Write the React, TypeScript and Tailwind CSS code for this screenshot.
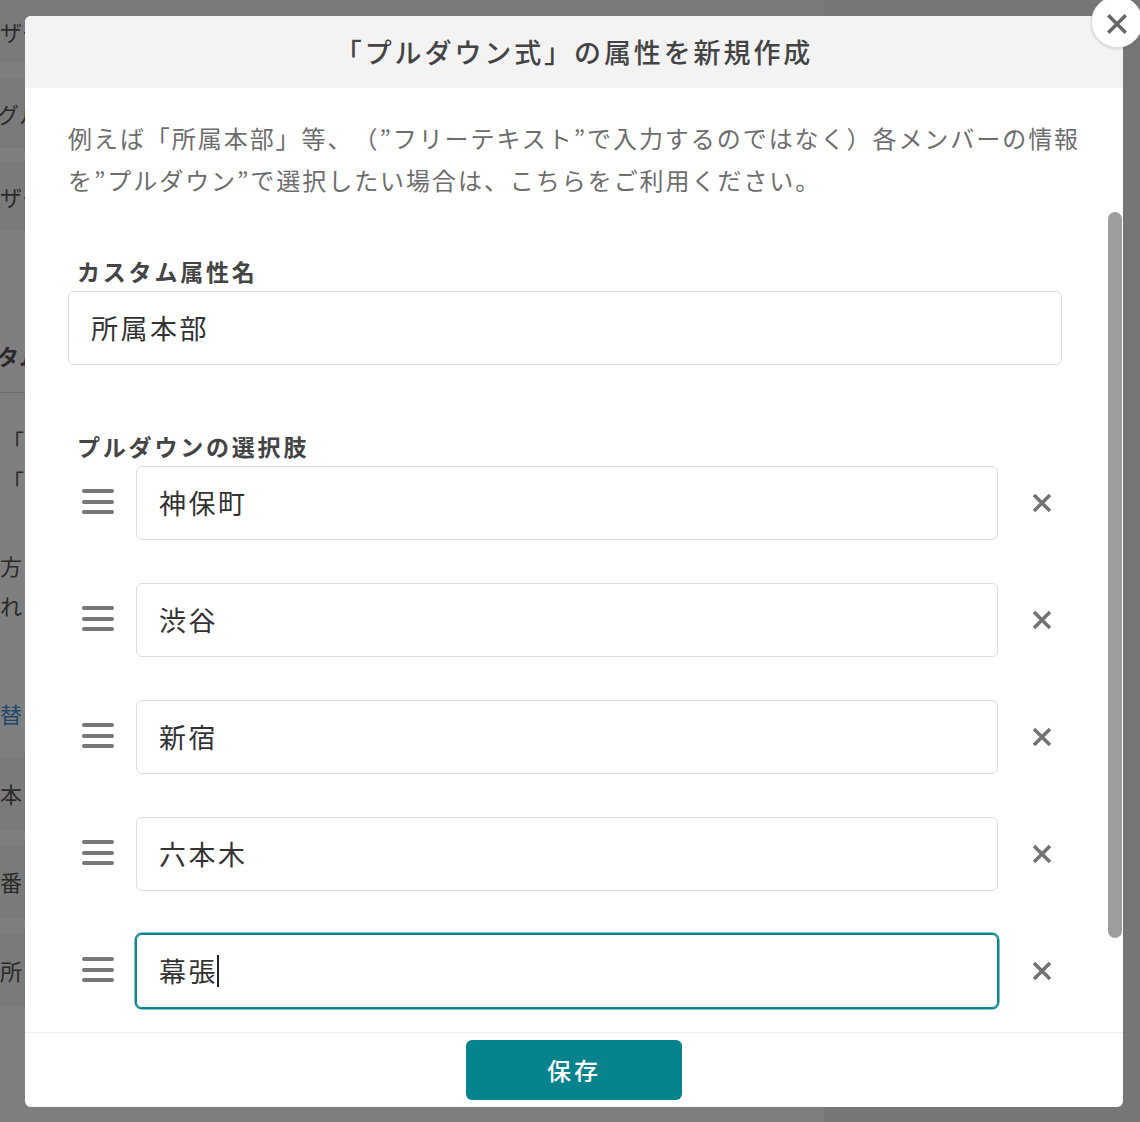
import React from "react";

const FONT = "font-['Noto_Sans_CJK_JP','Noto_Sans',sans-serif] [text-spacing-trim:space-all]";

const OPTIONS = ["神保町", "渋谷", "新宿", "六本木", "幕張"];

function DragHandle() {
  return (
    <div className="w-[32px] shrink-0 flex flex-col gap-[6.5px] -mt-[3px]">
      <span className="h-[4px] rounded-full bg-[#777]" />
      <span className="h-[4px] rounded-full bg-[#777]" />
      <span className="h-[4px] rounded-full bg-[#777]" />
    </div>
  );
}

function Cross({ size = 22, stroke = 3.5, color = "#727272" }) {
  return (
    <svg width={size} height={size} viewBox="0 0 22 22" fill="none">
      <path d="M3 3L19 19M19 3L3 19" stroke={color} strokeWidth={stroke} />
    </svg>
  );
}

function BackgroundPage() {
  return (
    <div className="flex h-[1122px] w-full bg-white">
      <div className="w-[824px] flex flex-col text-[22px] text-[#555] overflow-hidden">
        <div className="h-[63px] bg-[#f4f4f4] flex items-center">
          <span className="whitespace-nowrap">ザー名</span>
        </div>
        <div className="h-[15px]" />
        <div className="h-[70px] bg-[#f4f4f4] flex items-center">
          <span className="-ml-[3px] whitespace-nowrap">グループ</span>
        </div>
        <div className="h-[15px]" />
        <div className="h-[67px] bg-[#f4f4f4] flex items-center">
          <span className="whitespace-nowrap">ザー種別</span>
        </div>
        <div className="h-[162px] flex items-end pb-[22px]">
          <span className="-ml-[3px] whitespace-nowrap font-bold leading-[30px]">
            タム属性
          </span>
        </div>
        <div className="h-px bg-[#dddddd]" />
        <div className="mt-[27px] leading-[40px]">
          <div className="ml-[2px]">「</div>
          <div className="ml-[2px]">「</div>
        </div>
        <div className="mt-[45px] leading-[40px]">
          <div>方</div>
          <div>れ</div>
        </div>
        <div className="mt-[68px] leading-[40px] text-[#4a8fd6]">
          <span className="whitespace-nowrap">替</span>
        </div>
        <div className="mt-[24px] h-[73px] bg-[#f4f4f4] flex items-center">
          <span>本</span>
        </div>
        <div className="h-[15px]" />
        <div className="h-[73px] bg-[#f4f4f4] flex items-center">
          <span>番</span>
        </div>
        <div className="h-[15px]" />
        <div className="h-[74px] bg-[#f4f4f4] flex items-center">
          <span>所</span>
        </div>
      </div>
      <div className="flex-1 bg-[#ececec]" />
    </div>
  );
}

function OptionRow({ value, focused }: { value: string; focused?: boolean }) {
  return (
    <div className="flex items-center">
      <div className="ml-[14px]">
        <DragHandle />
      </div>
      <div
        className={`ml-[22px] w-[862px] h-[74px] rounded-[6px] border px-[22px] flex items-center text-[27px] text-[#333] tracking-[2.5px] ${
          focused
            ? "border-[#0a8590] ring-[1.5px] ring-[#0a8590]"
            : "border-[#dcdcdc]"
        }`}
      >
        <span>{value}</span>
        {focused && <span className="-ml-[1px] w-[1.5px] h-[32px] bg-[#222]" />}
      </div>
      <button className="ml-[33px] flex items-center justify-center">
        <Cross />
      </button>
    </div>
  );
}

export default function App() {
  return (
    <div className={`relative h-[1122px] w-full overflow-hidden ${FONT}`}>
      <BackgroundPage />
      <div className="absolute inset-0 bg-black/50" />

      <div className="absolute left-[25px] top-[16px] w-[1098px] h-[1091px] bg-white rounded-[6px] flex flex-col overflow-hidden">
        <header className="h-[72px] shrink-0 bg-[#f3f3f3] flex items-center justify-center text-[27px] font-medium text-[#444] tracking-[2.9px]">
          「プルダウン式」の属性を新規作成
        </header>

        <div className="relative flex-1 overflow-hidden">
          <div className="pl-[43px] pt-[29px]">
            <p className="text-[24px] leading-[42px] tracking-[1.95px] text-[#6d6d6d] whitespace-nowrap">
              例えば「所属本部」等、（”フリーテキスト”で入力するのではなく）各メンバーの情報
              <br />
              を”プルダウン”で選択したい場合は、こちらをご利用ください。
            </p>

            <label className="block mt-[55px] pl-[9px] text-[23px] leading-[30px] font-bold text-[#444] tracking-[2.8px]">
              カスタム属性名
            </label>
            <div className="mt-[5px] w-[994px] h-[74px] rounded-[6px] border border-[#dcdcdc] px-[22px] flex items-center text-[27px] text-[#333] tracking-[2.5px]">
              所属本部
            </div>

            <label className="block mt-[66px] pl-[9px] text-[23px] leading-[30px] font-bold text-[#444] tracking-[2.8px]">
              プルダウンの選択肢
            </label>
            <div className="mt-[5px] flex flex-col gap-[43px]">
              {OPTIONS.map((o, i) => (
                <OptionRow key={o} value={o} focused={i === OPTIONS.length - 1} />
              ))}
            </div>
          </div>

          {/* overlay scrollbar thumb */}
          <div className="absolute right-[1px] top-[124px] w-[14px] h-[726px] rounded-full bg-[#9d9d9d]" />
        </div>

        <footer className="h-[75px] shrink-0 border-t border-[#f0f0f0] flex justify-center pt-[7px]">
          <button className="w-[216px] h-[60px] rounded-[6px] bg-[#06838c] text-white text-[24px] font-medium tracking-[3px]">
            保存
          </button>
        </footer>
      </div>

      <button className="absolute left-[1091px] -top-[4px] w-[52px] h-[52px] rounded-full bg-white border border-[#dedede] shadow-[0_1px_3px_rgba(0,0,0,0.15)] flex items-center justify-center pt-[4px]">
        <Cross size={24} stroke={3.2} color="#666" />
      </button>
    </div>
  );
}
